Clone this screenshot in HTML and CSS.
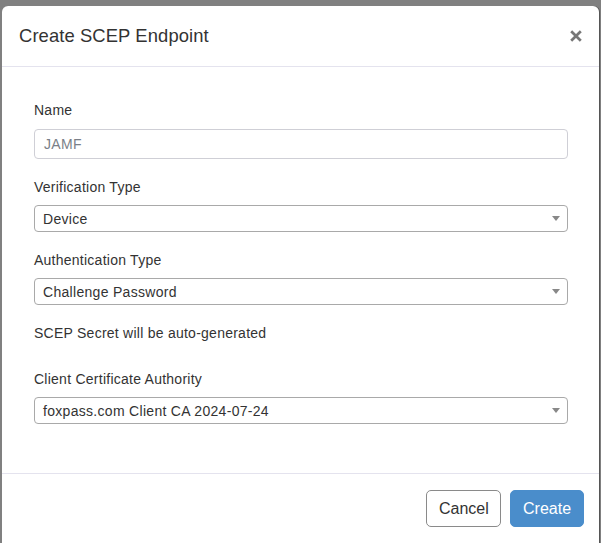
FILE: index.html
```html
<!DOCTYPE html>
<html lang="en">
<head>
<meta charset="utf-8">
<title>Create SCEP Endpoint</title>
<link rel="stylesheet" href="styles.css">
</head>
<body>
<div class="modal">
  <div class="modal-header">
    <h4 class="modal-title">Create SCEP Endpoint</h4>
    <button class="close" type="button" aria-label="Close">
      <svg width="12" height="12" viewBox="0 0 12 12"><path d="M1.2 1.2L10.8 10.8M10.8 1.2L1.2 10.8" stroke="#777" stroke-width="2.7" stroke-linecap="butt"/></svg>
    </button>
  </div>
  <div class="modal-body">
    <div class="group group-name">
      <label class="label">Name</label>
      <div class="input">JAMF</div>
    </div>
    <div class="group">
      <label class="label">Verification Type</label>
      <div class="select"><span>Device</span><i class="caret"></i></div>
    </div>
    <div class="group">
      <label class="label">Authentication Type</label>
      <div class="select"><span>Challenge Password</span><i class="caret"></i></div>
    </div>
    <p class="note">SCEP Secret will be auto-generated</p>
    <div class="group">
      <label class="label">Client Certificate Authority</label>
      <div class="select"><span>foxpass.com Client CA 2024-07-24</span><i class="caret"></i></div>
    </div>
  </div>
  <div class="modal-footer">
    <button class="btn btn-default" type="button">Cancel</button>
    <button class="btn btn-primary" type="button">Create</button>
  </div>
</div>
</body>
</html>
```
FILE: styles.css
```css
html, body {
  height: 100%;
}
body {
  margin: 0;
  background: #808080;
  overflow: hidden;
  font-family: "Liberation Sans", Arial, sans-serif;
  color: #333;
}
.modal {
  margin: 6px 2px 0 2px;
  background: #fff;
  border-radius: 6px 6px 0 0;
  min-height: 560px;
  box-shadow: 1px 0 0 #555;
}
.modal-header {
  height: 60px;
  display: flex;
  align-items: center;
  justify-content: space-between;
  padding: 0 17px 0 17px;
  border-bottom: 1px solid #e4e3ee;
}
.modal-title {
  margin: 0;
  font-size: 18.4px;
  font-weight: normal;
  line-height: 20px;
  color: #333;
  letter-spacing: 0.1px;
}
.close {
  border: 0;
  background: none;
  padding: 0;
  width: 12px;
  height: 12px;
  display: flex;
  margin-top: -1px;
}
.modal-body {
  padding: 32px 31px 49px 32px;
}
.group {
  margin-top: 17px;
}
.group-name {
  margin-top: 0;
}
.label {
  display: block;
  font-size: 14px;
  line-height: 20px;
  padding-top: 1px;
  margin-bottom: 8px;
  color: #333;
  letter-spacing: 0.25px;
}
.group-name .label {
  margin-bottom: 9px;
}
.input {
  height: 30px;
  box-sizing: border-box;
  border: 1px solid #cfcfd6;
  border-radius: 4px;
  padding: 0 9px;
  display: flex;
  align-items: center;
  font-size: 14px;
  color: #7a7f88;
  letter-spacing: 0.3px;
}
.select {
  height: 27px;
  box-sizing: border-box;
  border: 1px solid #a9a9a9;
  border-radius: 4px;
  padding: 0 7px 0 8px;
  display: flex;
  align-items: center;
  justify-content: space-between;
  font-size: 14px;
  color: #333;
  letter-spacing: 0.3px;
}
.caret {
  width: 0;
  height: 0;
  border-left: 4px solid transparent;
  border-right: 4px solid transparent;
  border-top: 5px solid #888;
}
.note {
  margin: 18px 0 0 0;
  padding-top: 1px;
  font-size: 14px;
  line-height: 19px;
  color: #333;
  letter-spacing: 0.25px;
}
.note + .group {
  margin-top: 25px;
}
.modal-footer {
  border-top: 1px solid #e4e3ee;
  padding: 16px 15px 0 0;
  display: flex;
  justify-content: flex-end;
  gap: 9px;
}
.btn {
  height: 37px;
  box-sizing: border-box;
  border-radius: 5px;
  font-family: "Liberation Sans", Arial, sans-serif;
  font-size: 16px;
  padding: 0 12px;
  cursor: pointer;
}
.btn-default {
  width: 75px;
  background: #fff;
  border: 1px solid #8a8a8a;
  color: #333;
}
.btn-primary {
  width: 74px;
  background: #4a8dcb;
  border: 1px solid #4a8dcb;
  color: #fff;
}
```
